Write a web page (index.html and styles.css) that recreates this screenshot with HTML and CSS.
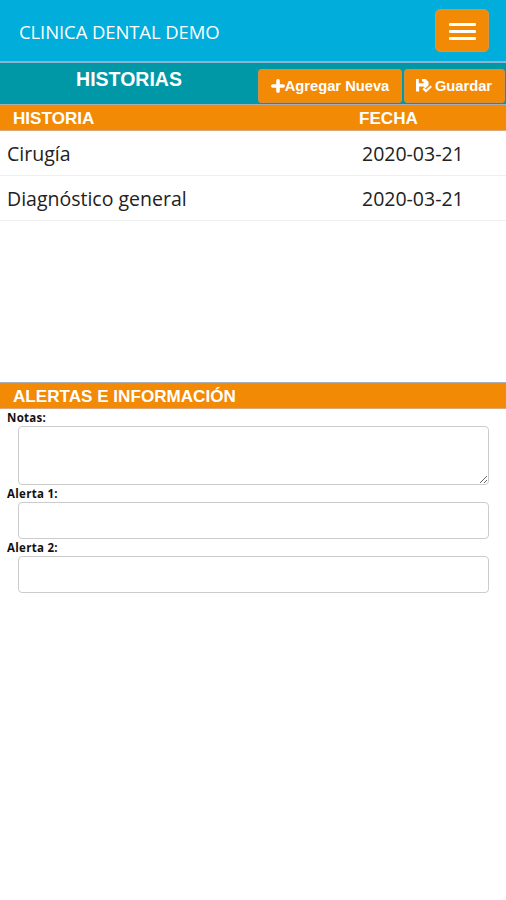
FILE: index.html
```html
<!DOCTYPE html>
<html lang="es">
    <head>
        <meta charset="UTF-8">
        <meta name="viewport" content="width=device-width, initial-scale=1.0">
        <title>Historias</title>
        <link rel="stylesheet" href="styles.css">
    </head>
    <body>
        <nav class="navbar">
            <span class="brand">CLINICA DENTAL DEMO</span>
            <button class="toggle" aria-label="Menu">
                <span></span>
                <span></span>
                <span></span>
            </button>
        </nav>
        <div class="toolbar">
            <h1 class="title">HISTORIAS</h1>
            <div class="actions">
                <button class="btn btn-add">
                    <svg class="icon-plus" viewBox="0 0 14 14"><path d="M7 1.8v10.4M1.8 7h10.4"/></svg><span>Agregar Nueva</span>
                </button>
                <button class="btn btn-save">
                    <svg class="icon-save" viewBox="0 0 18 16">
                        <path d="M1 1h2.8v4.2h4.8V3.6H7V1h3.6l3 3v3.2L10.4 10.4 8.4 8.4H4.2v5.1H1z"/>
                        <path class="check" d="M8.2 10.4l2.8 2.6 5.2-4.8"/>
                    </svg><span>Guardar</span>
                </button>
            </div>
        </div>
        <div class="bar columns">
            <span>HISTORIA</span>
            <span>FECHA</span>
        </div>
        <div class="list">
            <div class="row">
                <span>Cirugía</span>
                <span>2020-03-21</span>
            </div>
            <div class="row">
                <span>Diagnóstico general</span>
                <span>2020-03-21</span>
            </div>
        </div>
        <div class="bar">
            <span>ALERTAS E INFORMACIÓN</span>
        </div>
        <form class="form">
            <label for="notas">Notas:</label>
            <textarea class="field notes" id="notas"></textarea>
            <label for="alerta1">Alerta 1:</label>
            <input type="text" class="field" id="alerta1">
            <label for="alerta2">Alerta 2:</label>
            <input type="text" class="field" id="alerta2">
        </form>
    </body>
</html>
```

FILE: styles.css
```css
:root {
    --blue:   #00addb; /* Navbar */
    --teal:   #0097a7; /* Toolbar */
    --orange: #f28a05; /* Buttons and bars */
    --line:   #a8acb4; /* Line around the bars */
}
* {
    box-sizing: border-box;
}
body {
    margin: 0px;
    background: #fff;
    color: #222;
    font-family: "Open Sans", sans-serif;
}
button {
    border: 0px;
    background: var(--orange);
    color: #fff;
}

/* #region Header */
.navbar {
    display: flex;
    align-items: center;
    justify-content: space-between;
    height: 63px;
    padding: 0px 17px 0px 19px;
    border-bottom: 2px solid #8ab4cf;
    background: var(--blue);
}
.brand {
    color: #fff;
    font-size: 18.5px;
    letter-spacing: -0.1px;
    padding-top: 2px;
}
.toggle {
    display: flex;
    flex-direction: column;
    align-items: center;
    justify-content: center;
    gap: 4px;
    width: 54px;
    height: 43px;
    padding: 2px 0px 0px;
    border: 1px solid #d79545;
    border-radius: 5px;
}
.toggle > span {
    width: 27px;
    height: 3px;
    border-radius: 1px;
    background: #fff;
}
.toolbar {
    display: flex;
    height: 41px;
    background: var(--teal);
}
.title {
    width: 258px;
    margin: 0px;
    padding-top: 4px;
    color: #fff;
    font: bold 19.5px/24px "Liberation Sans", sans-serif;
    text-align: center;
}
.actions {
    display: flex;
    gap: 2px;
    padding: 6px 0px 1px;
}
.btn {
    display: flex;
    align-items: center;
    justify-content: center;
    padding: 0px;
    border: 1px solid #d3903f;
    border-radius: 3px;
    font: bold 14.7px "Liberation Sans", sans-serif;
}
.btn-add {
    width: 144px;
}
.btn-save {
    width: 101px;
    padding-right: 2px;
    gap: 2px;
}
.icon-plus {
    width: 14px;
    height: 14px;
    stroke: #fff;
    stroke-width: 3.6;
    stroke-linecap: round;
}
.icon-save {
    width: 18px;
    height: 16px;
    fill: #fff;
}
.icon-save .check {
    fill: none;
    stroke: #fff;
    stroke-width: 2.2;
}
/* #endregion Header */

.bar {
    height: 27px;
    padding-left: 13px;
    border-top: 1px solid var(--line);
    border-bottom: 1px solid #dba77b;
    background: var(--orange);
    color: #fff;
    font: bold 17.1px/28px "Liberation Sans", sans-serif;
}
.columns {
    display: grid;
    grid-template-columns: 346px 1fr;
}
.list {
    height: 251px;
}
.row {
    display: grid;
    grid-template-columns: 355px 1fr;
    height: 45px;
    padding-left: 7px;
    border-bottom: 1px solid #eee;
    font-size: 19.5px;
    line-height: 45px;
}

/* #region Form */
.form {
    display: flex;
    flex-direction: column;
    padding: 0px 17px 0px 18px;
}
.form > label {
    height: 17px;
    margin-left: -11px;
    font-size: 11.5px;
    letter-spacing: 0.3px;
    font-weight: bold;
    line-height: 18px;
    color: #111;
}
.field {
    width: 100%;
    height: 37px;
    padding: 6px 12px;
    border: 1px solid #ccc;
    border-radius: 4px;
    background: #fff;
    font: 14px "Open Sans", sans-serif;
}
.notes {
    height: 59px;
}
/* #endregion Form */
```
